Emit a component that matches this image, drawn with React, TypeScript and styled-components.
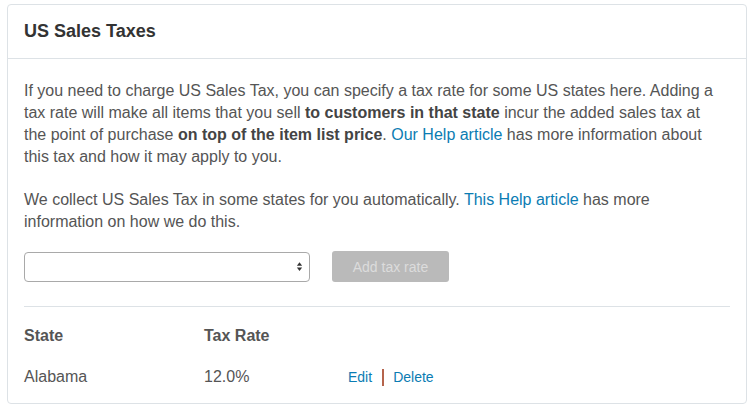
import React, { FC } from 'react';
import styled, { createGlobalStyle } from 'styled-components';

type TaxRate = {
  state: string;
  rate: string;
};

const rates: TaxRate[] = [{ state: 'Alabama', rate: '12.0%' }];

const GlobalStyle = createGlobalStyle`
  body {
    margin: 0;
    background: #fff;
    font-family: "Liberation Sans", Arial, Helvetica, sans-serif;
    color: #555;
  }
`;

const App: FC = () => (
  <>
    <GlobalStyle />
    <Panel>
      <PanelHeader>
        <Title>US Sales Taxes</Title>
      </PanelHeader>
      <PanelBody>
        <Paragraph>
          If you need to charge US Sales Tax, you can specify a tax rate for some US states here. Adding a
          tax rate will make all items that you sell <strong>to customers in that state</strong> incur the added
          sales tax at the point of purchase <strong>on top of the item list price</strong>.{' '}
          <Link href="#">Our Help article</Link> has more information about this tax and how it may apply to you.
        </Paragraph>
        <Paragraph>
          We collect US Sales Tax in some states for you automatically. <Link href="#">This Help article</Link> has
          more information on how we do this.
        </Paragraph>
        <Controls>
          <SelectBox>
            <Arrows viewBox="0 0 8 12" aria-hidden>
              <path d="M4 1 L7 5 L1 5 Z" fill="#333" />
              <path d="M4 11 L7 7 L1 7 Z" fill="#333" />
            </Arrows>
          </SelectBox>
          <AddButton disabled>Add tax rate</AddButton>
        </Controls>
        <Divider />
        <Table>
          <thead>
            <tr>
              <HeadCell>State</HeadCell>
              <HeadCell>Tax Rate</HeadCell>
              <HeadCell />
            </tr>
          </thead>
          <tbody>
            {rates.map(({ state, rate }) => (
              <tr key={state}>
                <Cell>{state}</Cell>
                <Cell>{rate}</Cell>
                <Cell>
                  <Actions>
                    <ActionLink href="#">Edit</ActionLink>
                    <Separator />
                    <ActionLink href="#">Delete</ActionLink>
                  </Actions>
                </Cell>
              </tr>
            ))}
          </tbody>
        </Table>
      </PanelBody>
    </Panel>
  </>
);

const Panel = styled.section`
  margin: 4px 0 0 7px;
  width: 738px;
  border: 1px solid #dde2e6;
  border-radius: 4px;
`;

const PanelHeader = styled.header`
  display: flex;
  align-items: center;
  height: 53px;
  padding: 0 16px;
  border-bottom: 1px solid #dde2e6;
`;

const Title = styled.h2`
  margin: 0;
  font-size: 18px;
  font-weight: bold;
  color: #333;
`;

const PanelBody = styled.div`
  padding: 21px 16px 12px;
`;

const Paragraph = styled.p`
  margin: 0 10px 21px 0;
  font-size: 16px;
  line-height: 22px;
  color: #555;

  strong {
    color: #444;
  }
`;

const Link = styled.a`
  color: #0b7cb3;
  text-decoration: none;
`;

const Controls = styled.div`
  display: flex;
  align-items: center;
  gap: 22px;
  margin-top: -3px;
`;

const SelectBox = styled.div`
  box-sizing: border-box;
  display: flex;
  align-items: center;
  justify-content: flex-end;
  width: 286px;
  height: 30px;
  padding-right: 6px;
  border: 1px solid #a9a9a9;
  border-radius: 4px;
  background: #fff;
`;

const Arrows = styled.svg`
  width: 7px;
  height: 11px;
`;

const AddButton = styled.button`
  box-sizing: border-box;
  width: 117px;
  height: 31px;
  border: none;
  border-radius: 3px;
  background: #bababa;
  color: #dcdcdc;
  font-family: inherit;
  font-size: 14px;
`;

const Divider = styled.hr`
  margin: 24px 0 0;
  border: none;
  border-top: 1px solid #dde2e6;
`;

const Table = styled.table`
  border-collapse: collapse;
  font-size: 16px;
`;

const HeadCell = styled.th`
  height: 58px;
  padding: 0;
  text-align: left;
  vertical-align: middle;
  font-weight: bold;
  color: #555;

  &:nth-child(1) {
    width: 180px;
  }

  &:nth-child(2) {
    width: 144px;
  }
`;

const Cell = styled.td`
  height: 24px;
  padding: 0 0 2px;
  vertical-align: middle;
  color: #555;
`;

const Actions = styled.div`
  display: flex;
  align-items: center;
  gap: 9.5px;
  font-size: 14px;
`;

const ActionLink = styled.a`
  color: #0b7cb3;
  text-decoration: none;
`;

const Separator = styled.span`
  width: 2px;
  height: 17px;
  background: #b5644c;
`;

export default App;
